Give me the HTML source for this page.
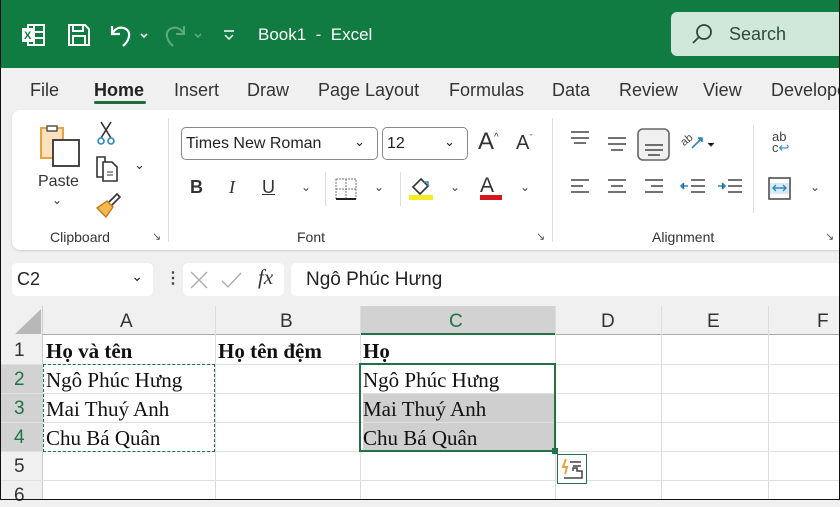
<!DOCTYPE html>
<html><head><meta charset="utf-8"><style>
*{box-sizing:border-box;margin:0;padding:0}
body{width:840px;height:500px;overflow:hidden;background:#f0f0f0;font-family:"Liberation Sans",sans-serif;position:relative;color:#222}
.a{position:absolute}
.t{font-size:18px;color:#333}
.ser{font-family:"Liberation Serif",serif;font-size:21px;color:#111}
.ch{font-size:12px;color:#444}
</style></head><body>
<!-- title bar -->
<div class="a" style="left:0;top:0;width:840px;height:68px;background:#107c41"></div>
<svg class="a" style="left:20;top:22px;left:20px" width="28" height="26" viewBox="0 0 28 26"><rect x="8" y="3" width="16" height="20" fill="none" stroke="#fff" stroke-width="2"/><line x1="14" y1="3" x2="14" y2="23" stroke="#fff" stroke-width="2"/><line x1="14" y1="10" x2="24" y2="10" stroke="#fff" stroke-width="2"/><line x1="14" y1="16" x2="24" y2="16" stroke="#fff" stroke-width="2"/><rect x="2" y="6" width="12" height="14" fill="#fff"/><text x="4" y="17" font-size="11" font-weight="bold" fill="#107c41" font-family="Liberation Sans">X</text></svg>
<svg class="a" style="left:66px;top:22px" width="26" height="26" viewBox="0 0 26 26"><path d="M3 3h16l4 4v16H3z" fill="none" stroke="#fff" stroke-width="2"/><rect x="7" y="3" width="10" height="6" fill="none" stroke="#fff" stroke-width="2"/><rect x="7" y="14" width="12" height="9" fill="none" stroke="#fff" stroke-width="2"/></svg>
<svg class="a" style="left:108px;top:22px" width="44" height="26" viewBox="0 0 44 26"><path d="M4 4v8h8M4 12c3-6 9-8 14-5s4 11-3 17" fill="none" stroke="#fff" stroke-width="2.2"/><path d="M33 12l3 3 3-3" fill="none" stroke="#fff" stroke-width="1.6"/></svg>
<svg class="a" style="left:162px;top:22px" width="44" height="26" viewBox="0 0 44 26"><path d="M22 4v8h-8M22 12c-3-6-9-8-14-5s-4 11 3 17" fill="none" stroke="#5fa87f" stroke-width="2"/><path d="M33 12l3 3 3-3" fill="none" stroke="#5fa87f" stroke-width="1.6"/></svg>
<svg class="a" style="left:222px;top:28px" width="14" height="14"><line x1="2" y1="3" x2="12" y2="3" stroke="#fff" stroke-width="1.5"/><path d="M3 7l4 4 4-4" fill="none" stroke="#fff" stroke-width="1.5"/></svg>
<div class="a" style="left:258px;top:25px;font-size:17px;color:#fff">Book1&nbsp; - &nbsp;Excel</div>
<div class="a" style="left:671px;top:12px;width:180px;height:44px;background:#cfe8d9;border-radius:6px"></div>
<svg class="a" style="left:690px;top:22px" width="24" height="24"><circle cx="14" cy="10" r="7" fill="none" stroke="#2b4a38" stroke-width="1.8"/><line x1="9" y1="15" x2="3" y2="21" stroke="#2b4a38" stroke-width="1.8"/></svg>
<div class="a" style="left:729px;top:24px;font-size:18px;color:#2b4a38">Search</div>
<!-- tabs -->
<div class="a t" style="left:30px;top:80px">File</div>
<div class="a t" style="left:94px;top:80px;font-weight:bold;color:#222">Home</div>
<div class="a" style="left:94px;top:101px;width:52px;height:3px;background:#1e6b40;border-radius:2px"></div>
<div class="a t" style="left:174px;top:80px">Insert</div>
<div class="a t" style="left:247px;top:80px">Draw</div>
<div class="a t" style="left:318px;top:80px">Page Layout</div>
<div class="a t" style="left:449px;top:80px">Formulas</div>
<div class="a t" style="left:552px;top:80px">Data</div>
<div class="a t" style="left:619px;top:80px">Review</div>
<div class="a t" style="left:703px;top:80px">View</div>
<div class="a t" style="left:771px;top:80px">Developer</div>
<!-- ribbon -->
<div class="a" style="left:12px;top:110px;width:840px;height:140px;background:#fff;border-radius:8px;box-shadow:0 1px 2px #ccc"></div>
<svg class="a" style="left:38px;top:122px" width="46" height="46"><path d="M3 6h22v30H3z" fill="#fbe2bd" stroke="#e8a33f" stroke-width="2"/><path d="M9 4h10v5H9z" fill="#fff" stroke="#555" stroke-width="1.5"/><rect x="15" y="18" width="26" height="26" fill="#fff" stroke="#333" stroke-width="1.8"/></svg>
<div class="a" style="left:38px;top:173px;font-size:16px;color:#333">Paste</div>
<div class="a" style="left:52px;top:193px;font-size:12px;color:#333">⌄</div>
<svg class="a" style="left:96px;top:120px" width="22" height="26"><path d="M5 2l10 16M15 2L5 18" stroke="#333" stroke-width="1.6"/><circle cx="5" cy="21" r="3" fill="none" stroke="#2b88c6" stroke-width="1.6"/><circle cx="15" cy="21" r="3" fill="none" stroke="#2b88c6" stroke-width="1.6"/></svg>
<svg class="a" style="left:94px;top:155px" width="26" height="28"><path d="M3 2h8v20H3z" fill="none" stroke="#333" stroke-width="1.6"/><path d="M9 7h9l5 5v14H9z" fill="#fff" stroke="#333" stroke-width="1.6"/><line x1="13" y1="17" x2="19" y2="17" stroke="#333"/><line x1="13" y1="20" x2="19" y2="20" stroke="#333"/></svg>
<div class="a" style="left:134px;top:157px;font-size:13px;color:#333">⌄</div>
<svg class="a" style="left:95px;top:192px" width="26" height="26"><path d="M14 10l8-8 3 3-8 8" fill="none" stroke="#333" stroke-width="1.6"/><path d="M2 16l10-7 6 6-7 10z" fill="#f5b94f" stroke="#c27a16" stroke-width="1.4"/></svg>
<div class="a" style="left:50px;top:229px;font-size:14px;color:#333">Clipboard</div>
<div class="a" style="left:152px;top:230px;font-size:11px;color:#555">↘</div>
<div class="a" style="left:168px;top:118px;width:1px;height:124px;background:#ddd"></div>
<div class="a" style="left:181px;top:127px;width:197px;height:33px;border:1px solid #888;border-radius:5px;font-size:16px;padding:7px 4px;color:#222">Times New Roman<span style="position:absolute;right:12px;top:6px;font-size:13px">⌄</span></div>
<div class="a" style="left:382px;top:127px;width:86px;height:33px;border:1px solid #888;border-radius:5px;font-size:16px;padding:7px 4px;color:#222">12<span style="position:absolute;right:12px;top:6px;font-size:13px">⌄</span></div>
<div class="a" style="left:478px;top:128px;font-size:24px;color:#333">A<sup style="font-size:10px">^</sup></div>
<div class="a" style="left:516px;top:132px;font-size:20px;color:#333">A<sup style="font-size:10px;color:#2b88c6">ˇ</sup></div>
<div class="a" style="left:190px;top:177px;font-size:18px;font-weight:bold;color:#333">B</div>
<div class="a" style="left:229px;top:177px;font-size:18px;font-style:italic;color:#333;font-family:'Liberation Serif'">I</div>
<div class="a" style="left:262px;top:177px;font-size:18px;text-decoration:underline;color:#333">U</div>
<div class="a ch" style="left:301px;top:180px">⌄</div>
<div class="a" style="left:325px;top:172px;width:1px;height:34px;background:#ddd"></div>
<svg class="a" style="left:334px;top:177px" width="24" height="24"><rect x="2" y="2" width="20" height="20" fill="none" stroke="#777" stroke-dasharray="2 1"/><line x1="12" y1="2" x2="12" y2="22" stroke="#777" stroke-dasharray="2 1"/><line x1="2" y1="12" x2="22" y2="12" stroke="#777" stroke-dasharray="2 1"/><line x1="2" y1="22" x2="22" y2="22" stroke="#222" stroke-width="2"/></svg>
<div class="a ch" style="left:374px;top:180px">⌄</div>
<div class="a" style="left:400px;top:172px;width:1px;height:34px;background:#ddd"></div>
<svg class="a" style="left:408px;top:174px" width="26" height="28"><path d="M5 13l8-8 7 7-8 8z" fill="none" stroke="#333" stroke-width="1.6"/><path d="M16 8l4 0 0 4" fill="none" stroke="#2b88c6" stroke-width="1.5"/><rect x="1" y="21" width="24" height="5" fill="#f6ec23"/></svg>
<div class="a ch" style="left:450px;top:180px">⌄</div>
<div class="a" style="left:480px;top:174px;font-size:21px;color:#333">A</div>
<div class="a" style="left:480px;top:195px;width:22px;height:5px;background:#d8141f"></div>
<div class="a ch" style="left:520px;top:180px">⌄</div>
<div class="a" style="left:297px;top:229px;font-size:14px;color:#333">Font</div>
<div class="a" style="left:536px;top:230px;font-size:11px;color:#555">↘</div>
<div class="a" style="left:552px;top:118px;width:1px;height:124px;background:#ddd"></div>
<svg class="a" style="left:568px;top:128px" width="180" height="76" stroke="#444" stroke-width="1.6">
<path d="M3 4h18M3 10h18M6 15h12"/><path d="M40 10h18M40 16h18M43 22h12"/>
<rect x="70" y="1" width="31" height="31" rx="5" fill="#f0f0f0" stroke="#666"/><path d="M77 17h18M77 22h18M80 27h12" />
<text x="112" y="17" font-size="11" fill="#444" stroke="none" transform="rotate(-40 116 12)" font-family="Liberation Sans">ab</text><path d="M124 20l10-10M130 10h4v4" stroke="#2b88c6"/><path d="M140 15l3 3 3-3" stroke-width="1.2"/>
<path d="M3 52h18M3 58h12M3 64h18"/><path d="M40 52h18M43 58h12M40 64h18"/><path d="M77 52h18M83 58h12M77 64h18"/>
<path d="M123 52h14M123 58h14M123 64h14"/><path d="M113 58h7M116 55l-3 3 3 3" stroke="#2b88c6"/>
<path d="M160 52h14M160 58h14M160 64h14"/><path d="M150 58h7M154 55l3 3-3 3" stroke="#2b88c6"/>
</svg>
<div class="a" style="left:652px;top:229px;font-size:14px;color:#333">Alignment</div>
<div class="a" style="left:825px;top:230px;font-size:11px;color:#555">↘</div>
<div class="a" style="left:753px;top:125px;width:1px;height:88px;background:#ddd"></div>
<div class="a" style="left:772px;top:131px;font-size:13px;line-height:11px;color:#444">ab<br>c<span style="color:#2b88c6">↩</span></div>
<svg class="a" style="left:768px;top:177px" width="24" height="24"><rect x="1" y="1" width="21" height="21" fill="none" stroke="#444" stroke-width="1.5"/><rect x="2" y="6" width="19" height="11" fill="#d6ebf7"/><path d="M5 11h13M8 8l-3 3 3 3M15 8l3 3-3 3" fill="none" stroke="#2b88c6" stroke-width="1.4"/></svg>
<div class="a ch" style="left:810px;top:180px">⌄</div>
<!-- formula bar -->
<div class="a" style="left:12px;top:263px;width:141px;height:33px;background:#fff;border-radius:5px;font-size:18px;padding:6px 5px;color:#222">C2<span style="position:absolute;right:10px;top:5px;font-size:14px">⌄</span></div>
<div class="a" style="left:165px;top:268px;font-size:16px;font-weight:bold;color:#444">⋮</div>
<div class="a" style="left:183px;top:263px;width:101px;height:33px;background:#fff;border-radius:5px"></div>
<svg class="a" style="left:188px;top:268px" width="60" height="24" stroke="#aaa" stroke-width="1.3" fill="none"><path d="M3 4l16 16M19 4L3 20"/><path d="M34 13l6 6 13-14"/></svg>
<div class="a" style="left:258px;top:265px;font-family:'Liberation Serif',serif;font-style:italic;font-size:21px;color:#333">fx</div>
<div class="a" style="left:291px;top:263px;width:560px;height:33px;background:#fff;border-radius:5px;font-size:19px;padding:6px 15px;color:#222">Ngô Phúc Hưng</div>
<!-- grid -->
<div class="a" style="left:0;top:306px;width:840px;height:194px;background:#fff"></div>
<div class="a" style="left:0;top:306px;width:840px;height:29px;background:#f0f0f0;border-bottom:1px solid #aaa"></div>
<div class="a" style="left:0;top:306px;width:43px;height:194px;background:#f0f0f0;border-right:1px solid #ccc"></div>
<svg class="a" style="left:14px;top:308px" width="28" height="26"><path d="M27 1v25H1z" fill="#b8b8b8"/></svg>
<div class="a" style="left:360px;top:306px;width:195px;height:29px;background:#d2d2d2;border-bottom:2px solid #217346"></div>
<div class="a" style="left:0;top:364px;width:43px;height:87px;background:#d2d2d2"></div>
<div class="a" style="left:363px;top:393px;width:191px;height:58px;background:#cfcfcf"></div>
<div class="a" style="left:215px;top:306px;width:1px;height:194px;background:#ddd"></div>
<div class="a" style="left:360px;top:306px;width:1px;height:194px;background:#ddd"></div>
<div class="a" style="left:555px;top:306px;width:1px;height:194px;background:#ddd"></div>
<div class="a" style="left:661px;top:306px;width:1px;height:194px;background:#ddd"></div>
<div class="a" style="left:768px;top:306px;width:1px;height:194px;background:#ddd"></div>
<div class="a" style="left:0;top:364px;width:840px;height:1px;background:#e0e0e0"></div>
<div class="a" style="left:0;top:393px;width:840px;height:1px;background:#e0e0e0"></div>
<div class="a" style="left:0;top:422px;width:840px;height:1px;background:#e0e0e0"></div>
<div class="a" style="left:0;top:451px;width:840px;height:1px;background:#e0e0e0"></div>
<div class="a" style="left:0;top:480px;width:840px;height:1px;background:#e0e0e0"></div>
<div class="a" style="left:120px;top:311px;font-size:19px;color:#333">A</div>
<div class="a" style="left:280px;top:311px;font-size:19px;color:#333">B</div>
<div class="a" style="left:449px;top:311px;font-size:19px;color:#217346">C</div>
<div class="a" style="left:601px;top:311px;font-size:19px;color:#333">D</div>
<div class="a" style="left:707px;top:311px;font-size:19px;color:#333">E</div>
<div class="a" style="left:817px;top:311px;font-size:19px;color:#333">F</div>
<div class="a" style="left:14px;top:340px;font-size:19px;color:#333">1</div>
<div class="a" style="left:14px;top:369px;font-size:19px;color:#217346">2</div>
<div class="a" style="left:14px;top:398px;font-size:19px;color:#217346">3</div>
<div class="a" style="left:14px;top:427px;font-size:19px;color:#217346">4</div>
<div class="a" style="left:14px;top:456px;font-size:19px;color:#333">5</div>
<div class="a" style="left:14px;top:485px;font-size:19px;color:#333">6</div>
<div class="a ser" style="left:46px;top:339px;font-weight:bold">Họ và tên</div>
<div class="a ser" style="left:218px;top:339px;font-weight:bold">Họ tên đệm</div>
<div class="a ser" style="left:363px;top:339px;font-weight:bold">Họ</div>
<div class="a ser" style="left:46px;top:368px">Ngô Phúc Hưng</div>
<div class="a ser" style="left:46px;top:397px">Mai Thuý Anh</div>
<div class="a ser" style="left:46px;top:426px">Chu Bá Quân</div>
<div class="a ser" style="left:363px;top:368px">Ngô Phúc Hưng</div>
<div class="a ser" style="left:363px;top:397px">Mai Thuý Anh</div>
<div class="a ser" style="left:363px;top:426px">Chu Bá Quân</div>
<div class="a" style="left:43px;top:364px;width:172px;height:88px;border:1.5px dashed #217346"></div>
<div class="a" style="left:359px;top:363px;width:197px;height:89px;border:2px solid #217346"></div>
<div class="a" style="left:552px;top:448px;width:6px;height:6px;background:#217346"></div>
<div class="a" style="left:557px;top:454px;width:30px;height:30px;border:1.5px solid #217346;background:#fff"></div>
<svg class="a" style="left:561px;top:458px" width="22" height="22"><path d="M5 1l-3 8h4l-2 7" fill="none" stroke="#e8a33f" stroke-width="2"/><path d="M9 4h11M12 8h8M3 20h18V13h-5v-3h-4v3" fill="none" stroke="#444" stroke-width="1.5"/></svg>
<div class="a" style="left:0;top:0;width:840px;height:500px;border:1.5px solid #111;border-top:none;pointer-events:none"></div>
</body></html>
